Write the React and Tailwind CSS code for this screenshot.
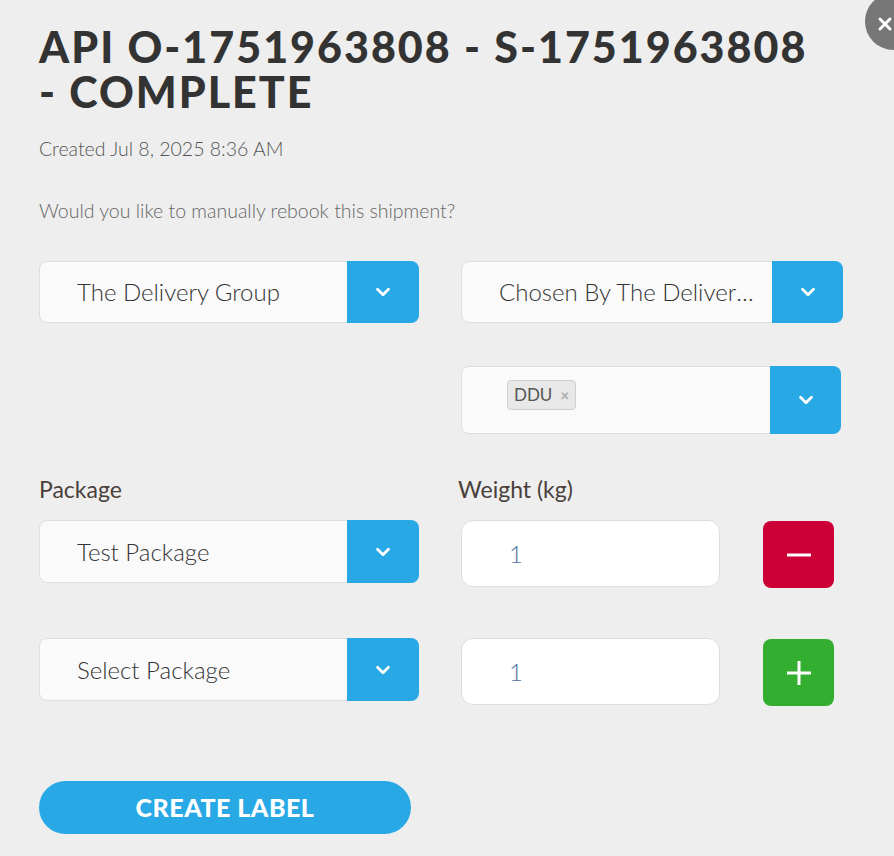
import { ChevronDown, X } from 'lucide-react';

function Select({ label, className = '', btnW = 'w-[72px]', children }) {
  return (
    <div className={`flex rounded-lg border border-[#dedede] bg-[#fafafa] ${className}`}>
      <div className="flex flex-1 items-center overflow-hidden pl-[37px] pr-3">
        {children || (
          <span className="truncate text-[24px] font-light text-[#333]">{label}</span>
        )}
      </div>
      <div className={`-my-px -mr-px flex ${btnW} items-center justify-center rounded-r-lg bg-[#29a8e6]`}>
        <ChevronDown className="h-[22px] w-[22px] text-white" strokeWidth={3} />
      </div>
    </div>
  );
}

function WeightRow({ sign }) {
  const minus = sign === '-';
  return (
    <div className="flex items-start">
      <div className="flex h-[67px] w-[259px] items-center rounded-xl border border-[#dedede] bg-white pl-[47px] text-[24px] font-light text-[#4b6fa0]">
        1
      </div>
      <button
        className={`ml-[43px] mt-px flex h-[67px] w-[71px] items-center justify-center rounded-lg ${
          minus ? 'bg-[#cc0037]' : 'bg-[#34ae30]'
        }`}
      >
        <svg width="26" height="26" viewBox="0 0 26 26" fill="none" stroke="white" strokeWidth="3">
          <path d="M1 13h24" />
          {!minus && <path d="M13 1v24" />}
        </svg>
      </button>
    </div>
  );
}

export default function App() {
  return (
    <div
      className="relative min-h-[856px] w-[894px] overflow-hidden bg-[#eeeeee] px-[39px] pt-[24px]"
      style={{ fontFamily: 'Lato, "Open Sans", sans-serif' }}
    >
      <button className="absolute -right-[28px] -top-[7px] flex h-[57px] w-[57px] items-center justify-center rounded-full bg-[#777]">
        <X className="mr-[18px] mt-[4px] h-5 w-5 text-white" strokeWidth={3.5} />
      </button>

      <h1 className="w-[800px] text-[43px] font-black uppercase leading-[45px] tracking-[2px] text-[#333]">
        API O-1751963808 - S-1751963808
        <br />- COMPLETE
      </h1>
      <p className="mt-[20px] text-[19.5px] font-light text-[#555]">Created Jul 8, 2025 8:36 AM</p>
      <p className="mt-[33px] text-[19.5px] font-light text-[#666]">
        Would you like to manually rebook this shipment?
      </p>

      <div className="mt-[35px] grid grid-cols-[380px_382px] gap-x-[42px]">
        <Select label="The Delivery Group" className="h-[62px]" />
        <Select label="Chosen By The Delivery Group" className="h-[62px]" btnW="w-[71px]" />
        <div />
        <Select className="mt-[43px] h-[68px] w-[380px]" btnW="w-[71px]">
          <span className="-mt-[9px] ml-2 flex items-center gap-2 rounded border border-[#cfcfcf] bg-[#e8e8e8] px-[6px] py-px text-[17px] text-[#555]">
            DDU <span className="text-[15px] font-bold text-[#aaa]">×</span>
          </span>
        </Select>
      </div>

      <div className="mt-[38px] grid grid-cols-[380px_382px] gap-x-[42px]">
        <span className="text-[23px] text-[#4a3f3a]">Package</span>
        <span className="-ml-[3px] text-[23px] text-[#4a3f3a]">Weight (kg)</span>
        <Select label="Test Package" className="mt-[14px] h-[63px] w-full" />
        <div className="mt-[14px]">
          <WeightRow sign="-" />
        </div>
        <Select label="Select Package" className="mt-[50px] h-[63px] w-full" />
        <div className="mt-[50px]">
          <WeightRow sign="+" />
        </div>
      </div>

      <button className="mt-[75px] h-[53px] w-[372px] rounded-full bg-[#29a8e6] text-[25px] font-black uppercase tracking-[0.5px] text-white">
        Create Label
      </button>
    </div>
  );
}
